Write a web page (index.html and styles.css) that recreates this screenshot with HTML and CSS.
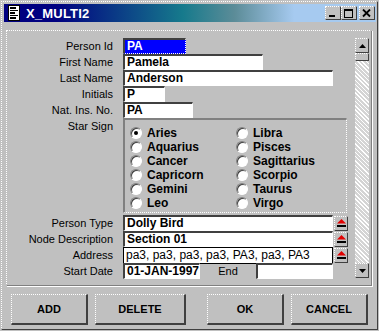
FILE: index.html
```html
<!DOCTYPE html>
<html>
<head>
<title>X_MULTI2</title>
<link rel="stylesheet" href="styles.css">
</head>
<body>

<div class="window">

	<div class="titlebar">
		<svg class="appicon" width="12" height="16" viewBox="0 0 12 16">
			<rect x="0.5" y="0.5" width="11" height="15" fill="#fff" stroke="#000"/>
			<rect x="2" y="2" width="6" height="2" fill="#000"/>
			<rect x="2" y="5" width="8" height="1" fill="#000"/>
			<rect x="2" y="7" width="5" height="2" fill="#000"/>
			<rect x="2" y="10" width="8" height="1" fill="#000"/>
			<rect x="2" y="12" width="6" height="2" fill="#000"/>
		</svg>
		<span class="title">X_MULTI2</span>
		<div class="ctrls">
			<span class="cbtn"><svg width="10" height="9" viewBox="0 0 10 9"><rect x="1" y="6" width="6" height="2" fill="#000"/></svg></span>
			<span class="cbtn"><svg width="10" height="9" viewBox="0 0 10 9"><rect x="0.5" y="0.5" width="8" height="8" fill="none" stroke="#000"/><rect x="0" y="0" width="9" height="2" fill="#000"/></svg></span>
			<span class="cbtn close"><svg width="10" height="9" viewBox="0 0 10 9"><path d="M1 0.5 L8 7.5 M8 0.5 L1 7.5" stroke="#000" stroke-width="1.8"/></svg></span>
		</div>
	</div><!-- end titlebar -->

	<div class="panel">
		<div class="form">

			<div class="row"><label>Person Id</label><div class="field selected w64">PA</div></div>
			<div class="row"><label>First Name</label><div class="field w140">Pamela</div></div>
			<div class="row"><label>Last Name</label><div class="field w210">Anderson</div></div>
			<div class="row"><label>Initials</label><div class="field w41">P</div></div>
			<div class="row"><label>Nat. Ins. No.</label><div class="field w70">PA</div></div>

			<div class="row grouprow">
				<label>Star Sign</label>
				<div class="group">
					<div class="radio"><span class="dot on"></span>Aries</div>
					<div class="radio"><span class="dot"></span>Libra</div>
					<div class="radio"><span class="dot"></span>Aquarius</div>
					<div class="radio"><span class="dot"></span>Pisces</div>
					<div class="radio"><span class="dot"></span>Cancer</div>
					<div class="radio"><span class="dot"></span>Sagittarius</div>
					<div class="radio"><span class="dot"></span>Capricorn</div>
					<div class="radio"><span class="dot"></span>Scorpio</div>
					<div class="radio"><span class="dot"></span>Gemini</div>
					<div class="radio"><span class="dot"></span>Taurus</div>
					<div class="radio"><span class="dot"></span>Leo</div>
					<div class="radio"><span class="dot"></span>Virgo</div>
				</div>
			</div>

			<div class="row lower first"><label>Person Type</label><div class="field w210">Dolly Bird</div><span class="lov"><svg width="9" height="8" viewBox="0 0 9 8"><path d="M4.5 0 L9 4.5 L0 4.5 Z" fill="#e00000"/><rect x="0" y="6" width="9" height="2" fill="#000"/></svg></span></div>
			<div class="row lower"><label>Node Description</label><div class="field w210">Section 01</div><span class="lov"><svg width="9" height="8" viewBox="0 0 9 8"><path d="M4.5 0 L9 4.5 L0 4.5 Z" fill="#e00000"/><rect x="0" y="6" width="9" height="2" fill="#000"/></svg></span></div>
			<div class="row lower"><label>Address</label><div class="field w210 focus">pa3, pa3, pa3, pa3, PA3, pa3, PA3</div><span class="lov"><svg width="9" height="8" viewBox="0 0 9 8"><path d="M4.5 0 L9 4.5 L0 4.5 Z" fill="#e00000"/><rect x="0" y="6" width="9" height="2" fill="#000"/></svg></span></div>
			<div class="row lower"><label>Start Date</label><div class="field w77">01-JAN-1997</div><span class="endlabel">End</span><div class="field w77"></div></div>

		</div><!-- end form -->

		<div class="vscroll">
			<span class="sbtn"><svg width="7" height="4" viewBox="0 0 7 4"><path d="M3.5 0 L7 4 L0 4 Z" fill="#000"/></svg></span>
			<span class="thumb"></span>
			<span class="track"></span>
			<span class="sbtn"><svg width="7" height="4" viewBox="0 0 7 4"><path d="M0 0 L7 0 L3.5 4 Z" fill="#000"/></svg></span>
		</div>
	</div><!-- end panel -->

	<div class="actions">
		<button class="btn w77">ADD</button>
		<button class="btn w91">DELETE</button>
		<button class="btn w77 gapbig">OK</button>
		<button class="btn w77">CANCEL</button>
	</div>

</div><!-- end window -->

</body>
</html>
```
FILE: styles.css
```css
* {
	margin: 0;
	padding: 0;
	box-sizing: border-box;
}

body {
	background: #c0c0c0;
	font-family: "Liberation Sans", Arial, sans-serif;
	font-size: 11px;
	color: #000;
}

.window {
	margin: 1px 0 0 1px;
	width: 377px;
	height: 329px;
	border-top: 1px dotted #fff;
	border-left: 1px dotted #fff;
	border-right: 1px solid #404040;
	border-bottom: 1px solid #404040;
}

.titlebar {
	margin: 2px 1px 0 2px;
	height: 18px;
	display: flex;
	align-items: center;
	padding-left: 4px;
	background: linear-gradient(90deg, #000080 0%, #000080 14%, #0a3a86 30%, #167a8c 48%, #5c8c98 62%, #a6caf0 78%, #a6caf0 100%);
}

.appicon {
	display: block;
}

.title {
	margin-left: 6px;
	color: #fff;
	font-weight: bold;
	font-size: 13px;
	letter-spacing: 0.2px;
}

.ctrls {
	margin-left: auto;
	margin-right: 1px;
	display: flex;
}

.cbtn {
	width: 16px;
	height: 14px;
	display: flex;
	align-items: center;
	justify-content: center;
	background: #c0c0c0;
	border-top: 1px dotted #fff;
	border-left: 1px dotted #fff;
	border-right: 1px solid #404040;
	border-bottom: 1px solid #404040;
}

.cbtn.close {
	margin-left: 2px;
}

.panel {
	margin: 8px 5px 0 4px;
	height: 256px;
	display: flex;
	border-top: 1px dotted #fff;
	border-left: 1px dotted #fff;
	border-right: 1px solid #808080;
	border-bottom: 1px solid #808080;
	box-shadow: 1px 1px 0 #fff;
}

.form {
	flex: 1;
	padding-top: 7px;
}

.row {
	display: flex;
	align-items: center;
	height: 16px;
}

.row label {
	width: 106px;
	text-align: right;
	margin-right: 10px;
	white-space: nowrap;
}

.field {
	height: 16px;
	background: #fff;
	font-weight: bold;
	font-size: 12px;
	line-height: 13px;
	padding-left: 2px;
	white-space: nowrap;
	overflow: hidden;
	border-top: 2px solid #404040;
	border-left: 2px solid #404040;
	border-right: 1px dotted #fff;
	border-bottom: 1px dotted #fff;
}

.field.selected {
	background: #0000ff;
	color: #fff;
}

.field.focus {
	border: 1px solid #000;
	font-weight: normal;
	line-height: 14px;
	height: 17px;
}

.w41 { width: 42px; }
.w64 { width: 63px; }
.w70 { width: 70px; }
.w77 { width: 77px; }
.w91 { width: 91px; }
.w140 { width: 140px; }
.w210 { width: 210px; }

.grouprow {
	height: 95px;
	align-items: flex-start;
}

.grouprow label {
	margin-top: 2px;
}

.group {
	width: 224px;
	height: 95px;
	padding: 6px 0 0 5px;
	display: grid;
	grid-template-columns: 106px 1fr;
	grid-auto-rows: 14px;
	border-top: 2px solid #808080;
	border-left: 2px solid #808080;
	border-right: 1px dotted #fff;
	border-bottom: 1px dotted #fff;
}

.radio {
	display: flex;
	align-items: center;
	font-weight: bold;
	font-size: 12px;
}

.dot {
	width: 12px;
	height: 12px;
	margin-right: 5px;
	border-radius: 50%;
	background: #fff;
	border: 1px solid;
	border-color: #808080 #fff #fff #808080;
	box-shadow: inset 1px 1px 0 #404040;
	display: flex;
	align-items: center;
	justify-content: center;
}

.dot.on::after {
	content: "";
	width: 4px;
	height: 4px;
	border-radius: 50%;
	background: #000;
}

.lower.first {
	margin-top: 2px;
}

.lov {
	width: 14px;
	height: 15px;
	margin-left: 1px;
	display: flex;
	align-items: center;
	justify-content: center;
	border-top: 1px dotted #fff;
	border-left: 1px dotted #fff;
	border-right: 1px solid #404040;
	border-bottom: 1px solid #404040;
}

.lov svg {
	display: block;
}

.endlabel {
	width: 56px;
	text-align: center;
}

.vscroll {
	width: 14px;
	margin: 7px 2px 7px 0;
	display: flex;
	flex-direction: column;
}

.sbtn, .thumb {
	height: 15px;
	display: flex;
	align-items: center;
	justify-content: center;
	border-top: 1px dotted #fff;
	border-left: 1px dotted #fff;
	border-right: 1px solid #404040;
	border-bottom: 1px solid #404040;
}

.thumb {
	height: 8px;
}

.track {
	flex: 1;
	background: repeating-linear-gradient(45deg, #fff 0 1px, #d4d4d4 1px 3px);
}

.actions {
	margin-top: 8px;
	padding-left: 9px;
	display: flex;
	gap: 7px;
}

.btn {
	height: 31px;
	background: #c0c0c0;
	font-family: "Liberation Sans", Arial, sans-serif;
	font-weight: bold;
	font-size: 11px;
	color: #000;
	border-top: 1px dotted #fff;
	border-left: 1px dotted #fff;
	border-right: 2px solid #404040;
	border-bottom: 2px solid #404040;
}

.btn.gapbig {
	margin-left: 14px;
}
```
